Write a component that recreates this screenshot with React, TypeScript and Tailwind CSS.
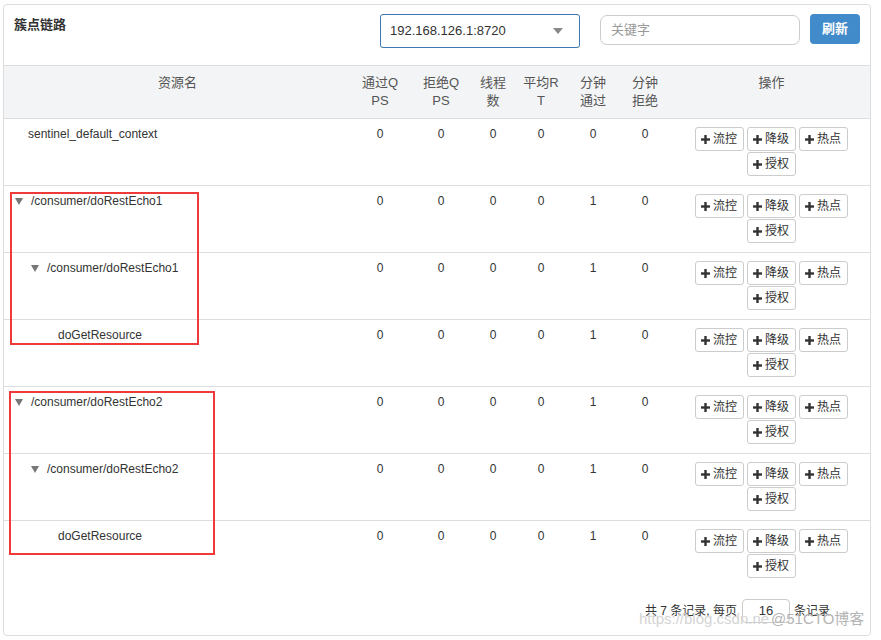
import React from "react";

const font = { fontFamily: '"Liberation Sans", Arial, "Noto Sans CJK SC", sans-serif' };

type Row = { name: string; level: number; tree: boolean; pass: number };

const rows: Row[] = [
  { name: "sentinel_default_context", level: 0, tree: false, pass: 0 },
  { name: "/consumer/doRestEcho1", level: 0, tree: true, pass: 1 },
  { name: "/consumer/doRestEcho1", level: 1, tree: true, pass: 1 },
  { name: "doGetResource", level: 2, tree: false, pass: 1 },
  { name: "/consumer/doRestEcho2", level: 0, tree: true, pass: 1 },
  { name: "/consumer/doRestEcho2", level: 1, tree: true, pass: 1 },
  { name: "doGetResource", level: 2, tree: false, pass: 1 },
];

const cols = "grid grid-cols-[347px_58px_64px_40px_56px_48px_56px_1fr] items-start";

function Plus() {
  return (
    <svg width="9" height="9" viewBox="0 0 9 9" className="mr-[3px]">
      <rect x="3.3" y="0" width="2.4" height="9" fill="#333" />
      <rect x="0" y="3.3" width="9" height="2.4" fill="#333" />
    </svg>
  );
}

function Btn({ label }: { label: string }) {
  return (
    <div className="flex h-[24px] w-[49px] items-center justify-center rounded-[3px] border border-[#ccc] bg-white text-[12px] text-[#333]">
      <Plus />
      {label}
    </div>
  );
}

function NameCell({ r }: { r: Row }) {
  if (r.tree) {
    const triLeft = r.level === 0 ? 11 : 27;
    return (
      <div className="flex h-[17px] items-center self-start" style={{ paddingLeft: triLeft }}>
        <span className="mr-[8px] inline-block h-0 w-0 border-x-[4px] border-t-[7px] border-x-transparent border-t-[#777]" />
        <span>{r.name}</span>
      </div>
    );
  }
  return <div style={{ paddingLeft: r.level === 0 ? 24 : 54 }}>{r.name}</div>;
}

export default function App() {
  return (
    <div className="relative min-h-[640px] bg-white pl-[3px] pt-[4px]" style={font}>
      <div className="w-[868px] rounded-[4px] border border-[#ddd] bg-white">
        {/* header */}
        <div className="flex h-[61px] items-start border-b border-[#ddd]">
          <div className="ml-[10px] mt-[12px] text-[13px] font-bold leading-[16px] text-[#333]">簇点链路</div>
          <div className="ml-auto mr-[10px] mt-[9px] flex items-start">
            <div className="flex h-[34px] w-[200px] items-center justify-between rounded-[3px] border border-[#3d76b5] pl-[9px] pr-[16px] text-[13px] text-[#333]">
              <span>192.168.126.1:8720</span>
              <span className="inline-block h-0 w-0 border-x-[5px] border-t-[6px] border-x-transparent border-t-[#888]" />
            </div>
            <div className="ml-[20px] mt-px flex h-[30px] w-[200px] items-center rounded-[7px] border border-[#ccc] pl-[10px] text-[13px] text-[#999]">
              关键字
            </div>
            <div className="ml-[10px] flex h-[30px] w-[50px] items-center justify-center rounded-[4px] bg-[#428bca] text-[13px] font-bold text-white">
              刷新
            </div>
          </div>
        </div>

        {/* table head */}
        <div className={`${cols} bg-[#f3f4f6] py-[8px] text-center text-[13px] leading-[18px] text-[#555]`}>
          <div>资源名</div>
          <div>通过Q<br />PS</div>
          <div>拒绝Q<br />PS</div>
          <div>线程<br />数</div>
          <div>平均R<br />T</div>
          <div>分钟<br />通过</div>
          <div>分钟<br />拒绝</div>
          <div>操作</div>
        </div>

        {/* rows */}
        {rows.map((r, i) => (
          <div
            key={i}
            className={`${cols} h-[67px] border-t border-[#ddd] pt-[7px] text-[12px] leading-[17px] text-[#333]`}
          >
            <NameCell r={r} />
            <div className="text-center">0</div>
            <div className="text-center">0</div>
            <div className="text-center">0</div>
            <div className="text-center">0</div>
            <div className="text-center">{r.pass}</div>
            <div className="text-center">0</div>
            <div className="mt-px flex flex-wrap content-start justify-center gap-x-[3px] gap-y-px self-start pr-[1px]">
              <Btn label="流控" />
              <Btn label="降级" />
              <Btn label="热点" />
              <Btn label="授权" />
            </div>
          </div>
        ))}

        {/* footer */}
        <div className="flex h-[48px] items-center justify-end pr-[40px] text-[12px] text-[#333]">
          <span>共 7 条记录, 每页</span>
          <div className="ml-[5px] mr-[4px] flex h-[24px] w-[48px] items-center justify-center rounded-[4px] border border-[#ccc] text-[13px]">
            16
          </div>
          <span>条记录</span>
        </div>
      </div>

      {/* red annotation boxes */}
      <div className="pointer-events-none absolute left-[10px] top-[192px] h-[153px] w-[189px] border-2 border-[#ef3a3a]" />
      <div className="pointer-events-none absolute left-[9px] top-[391px] h-[164px] w-[206px] border-2 border-[#ef3a3a]" />

      {/* watermark */}
      <div className="pointer-events-none absolute left-[639px] top-[610px] whitespace-nowrap text-[15px] leading-[18px] text-[#d4d4d4]">
        https://blog.csdn.ne
      </div>
      <div className="pointer-events-none absolute left-[771px] top-[610px] whitespace-nowrap text-[15px] leading-[18px] text-[#b5b5b5]">
        @51CTO博客
      </div>
    </div>
  );
}
